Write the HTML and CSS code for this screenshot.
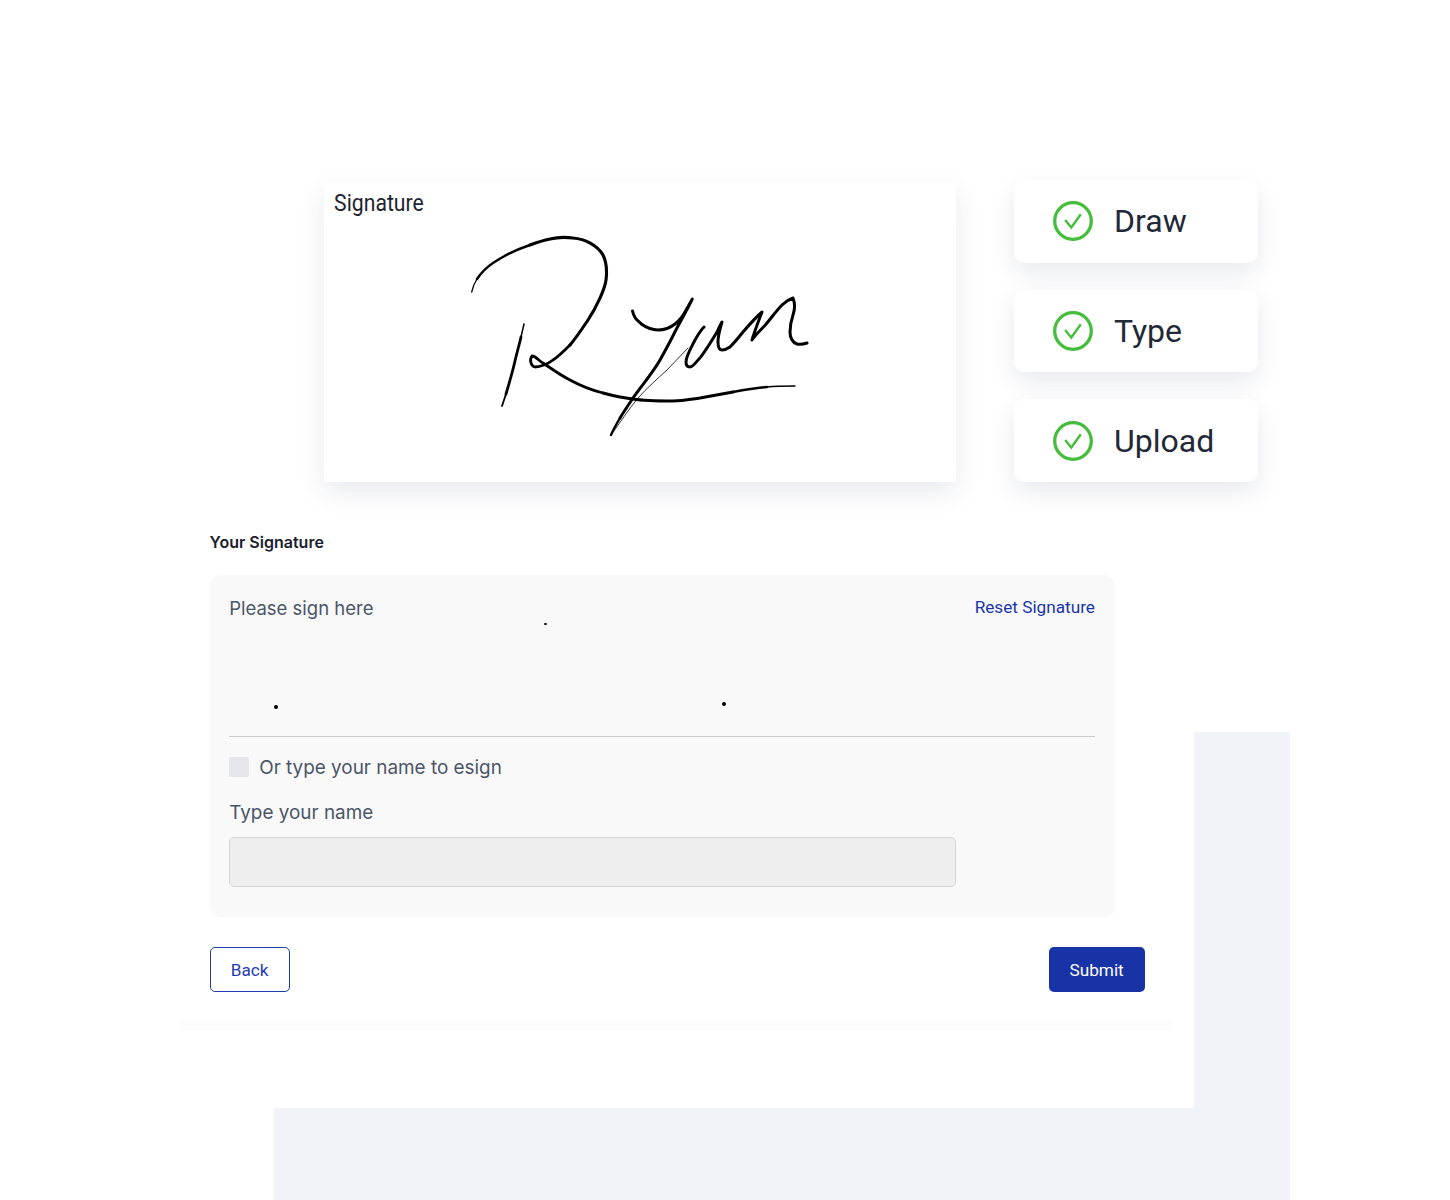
FILE: index.html
```html
<!DOCTYPE html>
<html lang="en">
  <head>
    <meta charset="UTF-8" />
    <title>Your Signature</title>
    <link rel="stylesheet" href="styles.css">
  </head>
  <body>
    <div class="backdrop"></div>
    <div class="backdrop-cover"></div>
    <div class="form-edge"></div>
    <main class="page">
      <section class="top-row">
        <div class="signature-card">
          <div class="signature-title">Signature</div>
          <svg class="signature-art" viewBox="324 222 632 260">
            <g fill="none" stroke="#000" stroke-linecap="round" stroke-linejoin="round">
              <!-- R -->
              <path stroke-width="1.3" d="M471.7 292C473 286 475 282 477 279"/>
              <path stroke-width="2.4" d="M477 279C481 273 487 267 493 263C505 255 518 249 530 245"/>
              <path stroke-width="3.1" d="M530 245C538 242 545 240 550 239C558 237 566 237 573 238C585 239 597 245 603 255C607 263 607 272 606 280C605 289 596 308 588 320C582 329 576 338 570 345"/>
              <path stroke-width="2.8" d="M570 345C564 351 558 357 553 360C548 364 540 367 535 367C531 366 529 360 532 356C536 356 539 361 543 363C552 369 560 375 570 380C581 386 591 390 603 393"/>
              <path stroke-width="3" d="M603 393C614 396 624 398 633 399C645 401 660 401 673 401C684 401 692 399 700 398C711 396 722 394 733 392"/>
              <path stroke-width="2.3" d="M733 392C744 390 755 388 767 387"/>
              <path stroke-width="1.4" d="M767 387C776 386 786 386 795 386"/>
              <!-- R stem -->
              <path stroke-width="1.5" d="M524 324L521 337"/>
              <path stroke-width="2.8" d="M521 337C519 346 517 352 515 361C512 374 509 384 506 394"/>
              <path stroke-width="1.8" d="M506 394L502 406"/>
              <!-- y -->
              <path stroke-width="3" d="M632.5 311C634 318 637 320 641.7 324.3C647 328 652 330 658 330C664 330 670 328 675 324C680 320 683 316 685 312C688 307 690 303 692.3 299C687 310 681 320 675 331.7C670 342 665 351 660 360C652 374 642 385 633 398C627 407 623 413 620 418"/>
              <path stroke-width="2.4" d="M620 418C617 423 614 428 611 435"/>
              <path stroke-width="0.8" d="M611 435C620 423 628 410 638 398C647 388 657 379 667 370C674 363 681 355 688 348"/>
              <!-- u n -->
              <path stroke-width="3" d="M704 327C700 331 698 335 695 340C691 348 686 356 686 362C686 366 688 367 690 367C693 367 696 362 699 359C702 356 704 352 707 348C711 342 714 337 717 332C719 328 720 325 722 322C720 329 718 335 718 342C718 347 719 350 722 350C725 350 727 349 730 347C735 342 739 337 743 332C749 325 755 318 762 312C759 320 755 330 752 340C757 333 762 329 767 323C772 317 777 310 782 305C786 301 790 299 793 298C795 303 795 309 793 315C791 321 790 326 790 332C790 338 793 343 797 344C801 345 804 344 807 343"/>
            </g>
          </svg>
        </div>
        <div class="method-list">
          <div class="method-card">
            <svg class="check-icon" viewBox="0 0 40 40"><circle cx="20" cy="20" r="18.3" /><path d="M12.1 19l6.2 7.5 9.5-13.3" /></svg>
            <span>Draw</span>
          </div>
          <div class="method-card">
            <svg class="check-icon" viewBox="0 0 40 40"><circle cx="20" cy="20" r="18.3" /><path d="M12.1 19l6.2 7.5 9.5-13.3" /></svg>
            <span>Type</span>
          </div>
          <div class="method-card">
            <svg class="check-icon" viewBox="0 0 40 40"><circle cx="20" cy="20" r="18.3" /><path d="M12.1 19l6.2 7.5 9.5-13.3" /></svg>
            <span>Upload</span>
          </div>
        </div>
      </section>

      <form class="sign-form">
        <h2>Your Signature</h2>
        <div class="sign-panel">
          <div class="sign-pad">
            <div class="sign-pad-head">
              <span>Please sign here</span>
              <a href="#">Reset Signature</a>
            </div>
            <i class="speck speck-a"></i>
            <i class="speck speck-b"></i>
            <i class="speck speck-c"></i>
          </div>
          <label class="check-row"><span class="checkbox"></span>Or type your name to esign</label>
          <label class="name-label" for="name">Type your name</label>
          <input type="text" id="name" name="name" disabled />
        </div>
        <div class="form-actions">
          <button type="button" class="btn btn-back">Back</button>
          <button type="submit" class="btn btn-submit">Submit</button>
        </div>
      </form>
    </main>
  </body>
</html>
```

FILE: styles.css
```css
html, body {
  margin: 0;
  height: 1200px;
  overflow: hidden;
  background: #ffffff;
}
body {
  font-family: Inter, "Liberation Sans", sans-serif;
  position: relative;
}
.backdrop {
  position: absolute;
  left: 274px;
  top: 732px;
  width: 1016px;
  height: 468px;
  background: #f0f3f8;
}
.backdrop-cover {
  position: absolute;
  left: 274px;
  top: 732px;
  width: 920px;
  height: 376px;
  background: #ffffff;
}
.form-edge {
  position: absolute;
  left: 180px;
  top: 1020px;
  width: 992px;
  height: 11px;
  background: #fdfdfd;
}
.page {
  position: relative;
  padding-top: 182px;
}
.top-row {
  display: flex;
  margin-left: 324px;
  gap: 58px;
}
.signature-card {
  width: 632px;
  height: 300px;
  background: #ffffff;
  box-shadow: 0 10px 24px rgba(40, 50, 90, 0.1);
}
.signature-title {
  height: 40px;
  padding: 7px 0 0 11px;
  box-sizing: border-box;
  font-family: Roboto, sans-serif;
  font-size: 23px;
  line-height: 30px;
  color: #1f2430;
  transform-origin: left top;
  transform: scaleX(0.92);
}
.signature-art {
  display: block;
  width: 632px;
  height: 260px;
}
.method-list {
  display: flex;
  flex-direction: column;
  gap: 27px;
  margin-top: -2px;
}
.method-card {
  width: 244px;
  height: 82.7px;
  display: flex;
  align-items: center;
  gap: 21px;
  padding-left: 39px;
  box-sizing: border-box;
  background: #ffffff;
  border-radius: 10px;
  box-shadow: 0 10px 24px rgba(40, 50, 90, 0.1);
  font-family: Roboto, sans-serif;
  font-size: 32px;
  color: #1f2937;
}
.check-icon {
  width: 40px;
  height: 40px;
  fill: none;
  stroke: #46bd3c;
  stroke-width: 3.3;
}
.check-icon path {
  stroke-width: 2.4;
}
.sign-form {
  width: 935px;
  margin: 48px 0 0 209.6px;
}
.sign-form h2 {
  margin: 0;
  font-size: 16px;
  font-weight: 600;
  line-height: 24px;
  color: #1a202c;
}
.sign-panel {
  width: 905px;
  height: 342px;
  margin-top: 21px;
  padding: 20px 19.6px 0;
  box-sizing: border-box;
  background: #f9f9f9;
  border-radius: 10px;
}
.sign-pad {
  position: relative;
  height: 141px;
  border-bottom: 1px solid #cbcccd;
}
.sign-pad-head {
  display: flex;
  justify-content: space-between;
  align-items: flex-start;
  font-size: 18.5px;
  line-height: 27px;
  color: #4a5568;
}
.sign-pad-head a {
  font-family: Roboto, sans-serif;
  font-size: 17.2px;
  line-height: 24px;
  color: #1a35a8;
  text-decoration: none;
}
.speck {
  position: absolute;
  background: #000000;
  border-radius: 50%;
}
.speck-a {
  left: 315px;
  top: 28px;
  width: 3px;
  height: 1.5px;
}
.speck-b {
  left: 45px;
  top: 110px;
  width: 4px;
  height: 4px;
}
.speck-c {
  left: 493px;
  top: 107px;
  width: 4px;
  height: 4px;
}
.check-row {
  display: flex;
  align-items: center;
  gap: 10px;
  margin-top: 19px;
  font-size: 18.9px;
  line-height: 24px;
  color: #4a5568;
}
.checkbox {
  width: 20px;
  height: 20px;
  margin-top: -2px;
  background: #e4e6eb;
  border-radius: 2px;
}
.name-label {
  display: block;
  margin-top: 19px;
  font-size: 18.9px;
  line-height: 28px;
  color: #4a5568;
}
.sign-panel input {
  display: block;
  width: 727px;
  height: 50px;
  margin-top: 10px;
  box-sizing: border-box;
  background: #eeeeee;
  border: 1px solid #d5d5d5;
  border-radius: 5px;
}
.form-actions {
  display: flex;
  justify-content: space-between;
  margin-top: 30px;
}
.btn {
  height: 45px;
  font-family: Roboto, sans-serif;
  font-size: 17.2px;
  border-radius: 5px;
  box-sizing: border-box;
  cursor: pointer;
}
.btn-back {
  width: 80px;
  background: #ffffff;
  color: #1f3cae;
  border: 1px solid #1f3cae;
}
.btn-submit {
  width: 96px;
  background: #1733a6;
  color: #ffffff;
  border: none;
}
```
